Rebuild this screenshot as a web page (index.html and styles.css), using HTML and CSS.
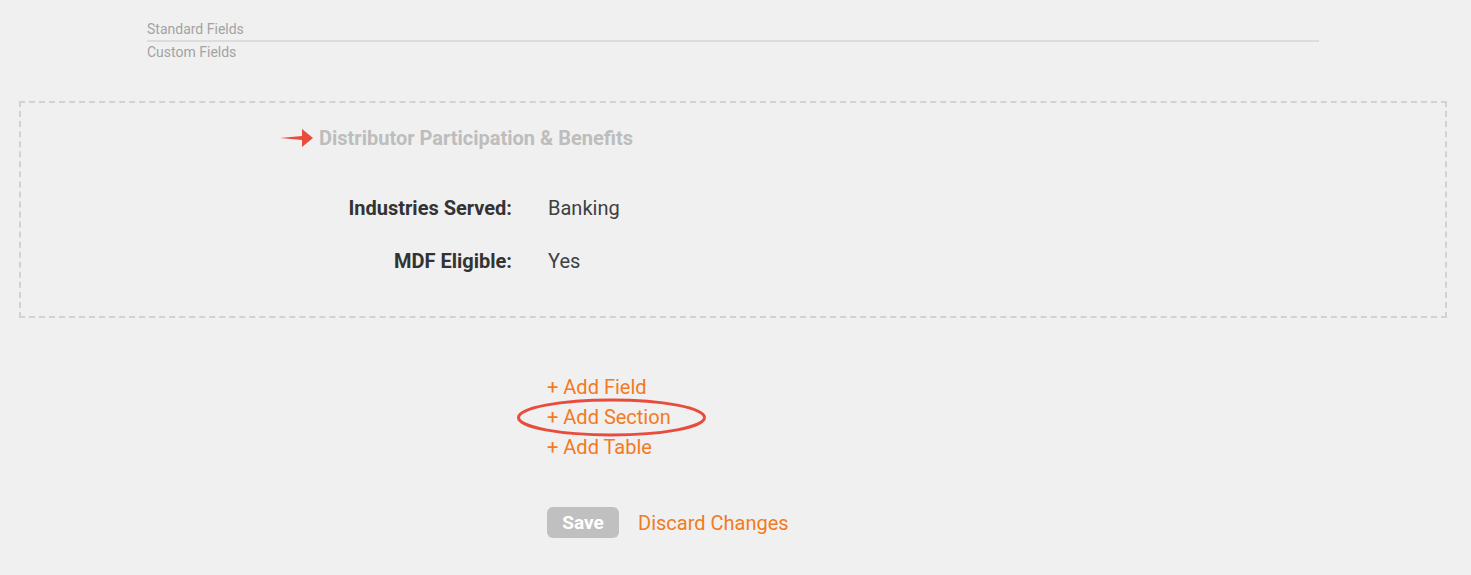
FILE: index.html
```html
<!DOCTYPE html>
<html lang="en">
    <head>
        <meta charset="UTF-8" />
        <meta name="viewport" content="width=device-width, initial-scale=1.0" />
        <link rel="stylesheet" href="styles.css">
        <title>Layout Editor</title>
    </head>
    <body>
        <div class="page">
            <!-- 字段类型切换 -->
            <div class="field-tabs">
                <div class="field-tab">Standard Fields</div>
                <div class="field-tab">Custom Fields</div>
            </div>

            <!-- 可编辑区块 -->
            <div class="section-box">
                <div class="section-header">
                    <svg class="section-arrow" width="33" height="18" viewBox="0 0 33 18">
                        <path d="M0 9 L22 7 L22 0 L33 9 L22 18 L22 11 Z" fill="#e84c3d" />
                    </svg>
                    <span class="section-title">Distributor Participation &amp; Benefits</span>
                </div>
                <div class="section-fields">
                    <div class="field-label">Industries Served:</div>
                    <div class="field-value">Banking</div>
                    <div class="field-label">MDF Eligible:</div>
                    <div class="field-value">Yes</div>
                </div>
            </div>

            <!-- 添加操作 -->
            <div class="add-actions">
                <a class="add-link" href="#">+ Add Field</a>
                <span class="add-link-wrap">
                    <a class="add-link" href="#">+ Add Section</a>
                    <svg class="add-ring" width="192" height="41" viewBox="0 0 192 41">
                        <ellipse cx="95.5" cy="20.5" rx="93" ry="17.5" fill="none" stroke="#e84c3d" stroke-width="3" />
                    </svg>
                </span>
                <a class="add-link" href="#">+ Add Table</a>
            </div>

            <div class="form-actions">
                <button class="save-btn" type="button">Save</button>
                <a class="discard-link" href="#">Discard Changes</a>
            </div>
        </div>
    </body>
</html>
```

FILE: styles.css
```css
/* 基础样式 */
body,
html {
    margin: 0;
    padding: 0;
    background: #f0f0f0;
    font-family: Roboto, "Liberation Sans", Arial, sans-serif;
    overflow: hidden;
}

.page {
    padding-top: 19px;
}

/* 字段类型切换 */
.field-tabs {
    margin-left: 147px;
    width: 1172px;
}

.field-tab {
    color: #a3a3a3;
    font-size: 14px;
    line-height: 20px;
}

.field-tab:first-child {
    border-bottom: 2px solid #dcdcdc;
    padding-bottom: 1px;
}

/* 区块容器 */
.section-box {
    margin: 39px 24px 0 19px;
    border: 2px dashed #d2d2d2;
    padding: 20px 0 41px;
}

.section-header {
    display: flex;
    align-items: center;
    gap: 6px;
    padding-left: 259px;
    height: 30px;
}

.section-title {
    color: #bdbdbd;
    font-size: 20px;
    font-weight: 700;
}

.section-fields {
    display: grid;
    grid-template-columns: 491px 1fr;
    column-gap: 36px;
    row-gap: 25px;
    margin-top: 41px;
    font-size: 20px;
    line-height: 28px;
}

.field-label {
    text-align: right;
    font-weight: 700;
    color: #333333;
}

.field-value {
    color: #404040;
}

/* 添加操作 */
.add-actions {
    display: flex;
    flex-direction: column;
    align-items: flex-start;
    margin: 54px 0 0 547px;
}

.add-link,
.discard-link {
    color: #f37a22;
    font-size: 20px;
    line-height: 30px;
    text-decoration: none;
}

.add-link-wrap {
    position: relative;
    display: inline-block;
}

.add-ring {
    position: absolute;
    left: -31px;
    top: -5px;
}

.form-actions {
    display: flex;
    align-items: center;
    gap: 19px;
    margin: 45px 0 0 547px;
}

.save-btn {
    width: 72px;
    height: 31px;
    border: none;
    border-radius: 6px;
    background: #c0c0c0;
    color: #ffffff;
    font-family: inherit;
    font-size: 19px;
    font-weight: 700;
    padding: 0;
}
```
